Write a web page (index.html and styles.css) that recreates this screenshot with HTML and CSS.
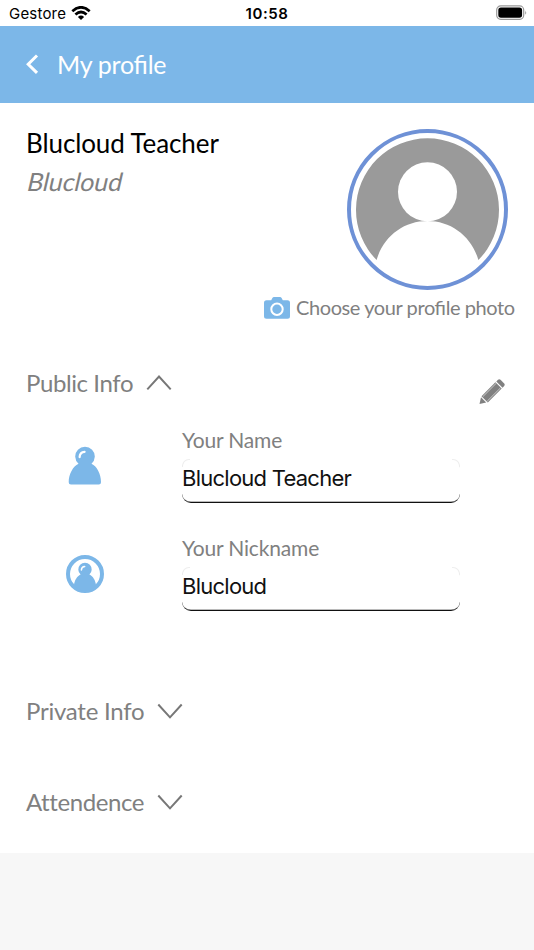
FILE: index.html
```html
<!DOCTYPE html>
<html lang="en">
<head>
<meta charset="utf-8">
<title>My profile</title>
<link rel="stylesheet" href="styles.css">
</head>
<body>
<div class="status">
  <div class="carrier"><span>Gestore</span>
    <svg width="20" height="14" viewBox="0 0 20 14"><g fill="none" stroke="#000" stroke-width="2.7"><path d="M1.300 5.200Q10-2.600 18.700 5.200"/><path d="M4.400 8.500Q10 3.500 15.600 8.500"/></g><path d="M6.900 10.900Q10 8.300 13.100 10.900L10 14z"/></svg>
  </div>
  <span class="clock">10:58</span>
  <svg class="battery" width="32" height="16" viewBox="0 0 32 16"><rect x=".7" y=".9" width="27" height="13.400" rx="4" fill="none" stroke="#999" stroke-width="1.200"/><rect x="2.300" y="2.500" width="23.800" height="10.200" rx="2.600"/><path d="M29.300 5.500q1.700 2.100 0 4.200z" fill="#888"/></svg>
</div>
<header class="header">
  <svg width="14" height="20" viewBox="0 0 14 20"><path d="M12 1.500 3.200 10.200l8.800 8.700" fill="none" stroke="#fff" stroke-width="3"/></svg>
  <h1>My profile</h1>
</header>
<main>
  <section class="profile">
    <div class="names">
      <h2>Blucloud Teacher</h2>
      <p>Blucloud</p>
    </div>
    <div class="avatar">
      <svg width="161" height="161" viewBox="0 0 161 161"><circle cx="80.500" cy="80.500" r="78.500" fill="#fff" stroke="#6e91d6" stroke-width="4"/><path d="M29.600 131A71.500 71.500 0 1 1 131.400 131C124.500 107 104 92 80.500 92S36.500 107 29.600 131z" fill="#9a9a9a"/><circle cx="80.500" cy="62.800" r="29.500" fill="#fff"/></svg>
    </div>
  </section>
  <div class="photo">
    <svg width="26" height="22" viewBox="0 0 26 22"><path fill="#7cb7e8" d="M2.500 3.200h4.700L8.400.9Q8.900 0 10 0h6q1.100 0 1.600.9l1.200 2.300h4.700Q26 3.200 26 5.700v13.600q0 2.500-2.500 2.500h-21Q0 21.800 0 19.300V5.700q0-2.500 2.500-2.500z"/><circle cx="13" cy="12.300" r="5.700" fill="none" stroke="#fff" stroke-width="2"/></svg>
    <span>Choose your profile photo</span>
  </div>
  <section class="public">
    <div class="section-title"><span class="t-public">Public Info</span>
      <svg width="26" height="16" viewBox="0 0 26 16"><path d="M1.300 14.300 13 1.500l11.700 12.800" fill="none" stroke="#777" stroke-width="2"/></svg></div>
    <svg class="pencil" width="26" height="26" viewBox="0 0 26 26"><g fill="#808080"><path d="M.5 25 2 18.200 7.200 23.500z"/><path d="M2.500 17.200 16.400 3.300l6.300 6.300L8.800 23.500z"/><path d="M17.300 2.400 19 .8q1.300-1 2.500 0L25.200 4.500q1 1.200 0 2.400L23.600 8.700z"/></g><path d="M3.800 17.700 17 4.500M8.200 22.200 21.500 8.900" stroke="#ddd" stroke-width=".8"/></svg>
  </section>
  <div class="row">
    <svg class="person" width="34" height="40" viewBox="0 0 34 40"><path fill="#7cb7e8" d="M10.500 17.800A9.800 9.800 0 1 1 23.500 17.800C29 20.500 33 28 33 36.200q0 2.300-2.200 2.300H3Q.7 38.500.7 36.200C.7 28 5 20.500 10.500 17.800z"/><path d="M11.600 11.100q.2-5 5-5.300" fill="none" stroke="#fff" stroke-width="2.200" stroke-linecap="round"/></svg>
    <div class="field"><label for="name">Your Name</label><div class="box"><input id="name" value="Blucloud Teacher"></div></div>
  </div>
  <div class="row">
    <svg class="person badge" width="38" height="38" viewBox="0 0 38 38"><circle cx="19" cy="19" r="17" fill="#fff" stroke="#7cb7e8" stroke-width="4"/><path fill="#7cb7e8" d="M14.600 19.500A6.700 6.700 0 1 1 23.400 19.500C27 21 29.500 25.500 30 30Q25 36 19 36T8 30C8.500 25.500 11 21 14.600 19.500z"/><path d="M15.400 15q.1-3.300 3.300-3.500" fill="none" stroke="#fff" stroke-width="1.500" stroke-linecap="round"/></svg>
    <div class="field"><label for="nick">Your Nickname</label><div class="box"><input id="nick" value="Blucloud"></div></div>
  </div>
  <div class="section-title private"><span>Private Info</span>
    <svg width="26" height="16" viewBox="0 0 26 16"><path d="M1.300 1.500 13 14.300 24.700 1.500" fill="none" stroke="#777" stroke-width="2"/></svg></div>
  <div class="section-title attendence"><span>Attendence</span>
    <svg width="26" height="16" viewBox="0 0 26 16"><path d="M1.300 1.500 13 14.300 24.700 1.500" fill="none" stroke="#777" stroke-width="2"/></svg></div>
</main>
</body>
</html>
```
FILE: styles.css
```css
* { box-sizing: border-box; }
body { margin: 0; height: 950px; overflow: hidden; background: #f7f7f7; font-family: Lato, sans-serif; color: #808080; }
svg { display: block; flex: none; }
h1, h2, p { margin: 0; font-weight: 400; white-space: nowrap; }
.status { height: 26px; background: #fff; color: #000; display: grid; grid-template-columns: 1fr auto 1fr; align-items: center; padding: 1px 6px 0 9px; font: 15px/24px Inter, sans-serif; }
.carrier { display: flex; gap: 5px; align-items: center; letter-spacing: .2px; }
.carrier svg { margin-bottom: 2px; }
.clock { font-weight: 600; letter-spacing: .6px; margin-right: 3px; }
.battery { justify-self: end; margin-bottom: 1px; }
.header { height: 77px; background: #7cb7e8; display: flex; align-items: center; padding: 0 0 1px 25px; gap: 18px; color: #fff; }
.header h1 { font-size: 25px; line-height: 30px; letter-spacing: -.25px; font-feature-settings: "liga" 1; }
main { height: 750px; background: #fff; overflow: hidden; }
.profile { height: 188px; display: flex; justify-content: space-between; padding: 26px 26px 0; }
.names h2 { color: #000; font-size: 26px; line-height: 28px; letter-spacing: -.1px; }
.names p { font-size: 25px; line-height: 30px; margin: 9px 0 0 2px; letter-spacing: -.1px; transform: skewX(-13deg); width: max-content; }
.photo { height: 32px; display: flex; align-items: center; padding: 2px 0 0 264px; gap: 6px; font-size: 20px; line-height: 30px; letter-spacing: -.41px; font-feature-settings: "liga" 1; white-space: nowrap; }
.photo span { margin-top: -2px; }
.public { height: 104px; padding: 45px 29px 0 26px; display: flex; justify-content: space-between; }
.pencil { margin-top: 11px; }
.section-title { display: flex; align-items: center; gap: 13px; height: 30px; font-size: 24px; line-height: 30px; letter-spacing: -.24px; }
.t-public { letter-spacing: -.4px; }
.row { display: grid; grid-template-columns: 182px 278px; height: 108px; }
.person { justify-self: center; margin: 19px 13px 0 0; }
.badge { margin-top: 20px; }
.field { display: flex; flex-direction: column; }
.field label { font-size: 21px; line-height: 26px; height: 32px; letter-spacing: -.15px; }
.box { position: relative; height: 44px; }
.box::before, .box::after { content: ""; position: absolute; top: 0; width: 7px; height: 7px; pointer-events: none; }
.box::before { left: 0; border-top: 1px solid #eee; border-left: 1px solid #eee; border-top-left-radius: 7px; }
.box::after { right: 0; border-top: 1px solid #eee; border-right: 1px solid #eee; border-top-right-radius: 7px; }
.field input { display: block; width: 278px; height: 44px; margin: 0; padding: 0 0 5px; border: 0 solid transparent; border-bottom: 1px solid #111; border-radius: 9px; outline: 0; background: #fff; color: #111; font: 22px Inter, sans-serif; letter-spacing: -.75px; box-shadow: inset 0 -.5px #777; }
.private { margin: 53px 0 0 26px; }
.attendence { margin: 61px 0 0 26px; letter-spacing: -.42px; }
```
